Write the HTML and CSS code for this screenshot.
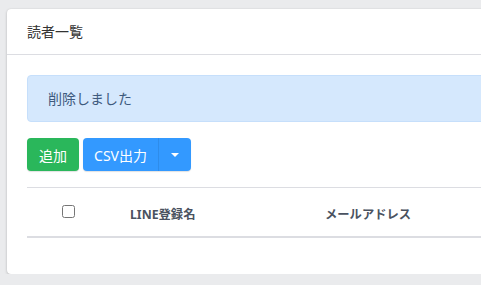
FILE: index.html
```html
<!DOCTYPE html>
<html lang="ja">
<head>
    <meta charset="UTF-8">
    <meta name="viewport" content="width=device-width, initial-scale=1.0">
    <title>読者一覧</title>
    <link rel="stylesheet" href="styles.css">
</head>
<body>
    <div class="content">
        <div class="card">
            <div class="card-header">読者一覧</div>
            <div class="card-body">
                <div class="alert">削除しました</div>

                <div class="toolbar">
                    <button type="button" class="btn btn-success">追加</button>
                    <div class="btn-group">
                        <button type="button" class="btn btn-primary btn-main">CSV出力</button>
                        <button type="button" class="btn btn-primary btn-caret"><span class="caret"></span></button>
                    </div>
                </div>

                <table class="table">
                    <thead>
                        <tr>
                            <th class="col-check"><input type="checkbox"></th>
                            <th class="col-name">LINE登録名</th>
                            <th>メールアドレス</th>
                        </tr>
                    </thead>
                </table>
            </div>
        </div>
    </div>
</body>
</html>
```

FILE: styles.css
```css
html, body {
    margin: 0;
    padding: 0;
    overflow: hidden;
}

body {
    font-family: "Noto Sans", "Noto Sans CJK JP", sans-serif;
    background-color: #eaebed;
    color: #212529;
}

.content {
    padding: 9px 0 0 7px;
}

.card {
    width: 620px;
    background-color: #ffffff;
    border-radius: 4px;
    box-shadow: 0 0 1px rgba(0, 0, 0, 0.13), 0 1px 3px rgba(0, 0, 0, 0.2);
}

.card-header {
    height: 46px;
    box-sizing: border-box;
    padding: 12px 20px;
    font-size: 14px;
    line-height: 21px;
    color: #333;
    border-bottom: 1px solid #dcdde2;
}

.card-body {
    padding: 20px;
}

.alert {
    height: 47px;
    box-sizing: border-box;
    padding: 12px 20px;
    font-size: 14px;
    line-height: 21px;
    color: #3e5a7e;
    background-color: #d5e8fd;
    border: 1px solid #c6dffb;
    border-radius: 4px;
    margin-bottom: 16px;
}

.toolbar {
    display: flex;
    gap: 4px;
    margin-bottom: 16px;
}

.btn-group {
    display: flex;
}

.btn {
    height: 33px;
    border: none;
    padding: 0 12px;
    font-family: inherit;
    font-size: 14px;
    color: #ffffff;
    white-space: nowrap;
    border-radius: 4px;
    box-shadow: 0 1px 1px rgba(0, 0, 0, 0.12);
    cursor: pointer;
}

.btn-success {
    width: 52px;
    background-color: #2ab75b;
}

.btn-primary {
    background-color: #3399ff;
}

.btn-main {
    width: 76px;
    padding: 0;
    border-radius: 4px 0 0 4px;
    border-right: 1px solid #2f8eed;
}

.btn-caret {
    width: 32px;
    border-radius: 0 4px 4px 0;
    display: flex;
    align-items: center;
    justify-content: center;
}

.caret {
    width: 0;
    height: 0;
    border-left: 4px solid transparent;
    border-right: 4px solid transparent;
    border-top: 4px solid #ffffff;
}

.table {
    width: 100%;
    border-collapse: collapse;
    table-layout: fixed;
    margin-bottom: 16px;
}

.table th {
    height: 49px;
    box-sizing: border-box;
    padding: 0 20px 13px;
    font-size: 12.3px;
    line-height: 17px;
    font-weight: 700;
    color: #4a5260;
    text-align: left;
    vertical-align: bottom;
    border-top: 1px solid #dcdde2;
    border-bottom: 2px solid #dcdde2;
}

.table .col-check {
    width: 83px;
    padding: 0;
    text-align: center;
    vertical-align: middle;
}

.table .col-name {
    width: 195px;
}

.table input[type="checkbox"] {
    display: block;
    width: 13px;
    height: 13px;
    margin: 0 auto;
}
```
